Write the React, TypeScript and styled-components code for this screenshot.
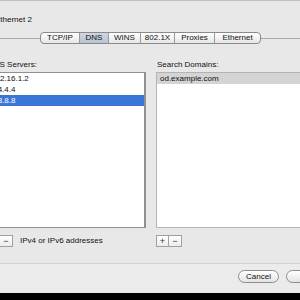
import { FC } from 'react';
import styled, { createGlobalStyle } from 'styled-components';

const GlobalStyle = createGlobalStyle`
  html, body {
    margin: 0;
    padding: 0;
    width: 300px;
    height: 300px;
    overflow: hidden;
    background: #000;
  }
  body {
    font-family: "Liberation Sans", Arial, sans-serif;
    font-size: 8px;
    color: #111;
  }
`;

const Window = styled.div`
  width: 300px;
  height: 293px;
  box-sizing: border-box;
  border-top: 1px solid #c2c2c2;
  background: #e8e8e8;
  overflow: hidden;
`;

const Sheet = styled.div`
  width: 343px;
  margin-left: -13px;
  display: flex;
  flex-direction: column;
`;

const Title = styled.div`
  margin: 14px 0 0 8px;
  line-height: 10px;
  height: 10px;
`;

const TabRow = styled.div`
  display: flex;
  align-items: center;
  margin-top: 7px;
  height: 12px;
`;

const TabLine = styled.div<{ $width?: number }>`
  height: 1px;
  background: #a8a8a8;
  ${({ $width }) => ($width ? `width: ${$width}px;` : 'flex: 1;')}
`;

const Segmented = styled.div`
  display: flex;
  height: 12px;
  box-sizing: border-box;
  border: 1px solid #8a8a8a;
  border-radius: 4px;
  overflow: hidden;
  background: linear-gradient(#ffffff, #e6e6e6);
`;

const Segment = styled.div<{ $width: number; $active?: boolean }>`
  width: ${({ $width }) => $width}px;
  box-sizing: border-box;
  display: flex;
  align-items: center;
  justify-content: center;
  line-height: 10px;
  border-left: 1px solid #9a9a9a;
  background: ${({ $active }) => ($active ? 'linear-gradient(#cfd6e0, #b9c2cf)' : 'transparent')};
  &:first-child {
    border-left: none;
  }
`;

const Columns = styled.div`
  display: flex;
  gap: 10px;
  margin-top: 16px;
`;

const Column = styled.div<{ $width: number }>`
  width: ${({ $width }) => $width}px;
  display: flex;
  flex-direction: column;
`;

const Label = styled.div`
  line-height: 10px;
  height: 10px;
  padding-left: 1px;
`;

const ListBox = styled.div<{ $focused?: boolean }>`
  margin-top: 2px;
  height: 156px;
  box-sizing: border-box;
  background: #fff;
  border: 1px solid ${({ $focused }) => ($focused ? '#8d9097' : '#b4b4b4')};
  border-right-width: ${({ $focused }) => ($focused ? 2 : 1)}px;
`;

const Row = styled.div<{ $selected?: boolean; $dim?: boolean }>`
  height: 11px;
  line-height: 11px;
  padding-left: 3px;
  background: ${({ $selected, $dim }) => ($selected ? ($dim ? '#d4d4d4' : '#3a76d7') : 'transparent')};
  color: ${({ $selected, $dim }) => ($selected && !$dim ? '#fff' : '#111')};
`;

const ButtonBar = styled.div`
  display: flex;
  align-items: center;
  margin-top: 7px;
  height: 12px;
`;

const SquareButton = styled.div`
  width: 13px;
  height: 12px;
  box-sizing: border-box;
  border: 1px solid #a0a0a0;
  background: linear-gradient(#ffffff, #ececec);
  display: flex;
  align-items: center;
  justify-content: center;
  font-size: 9px;
  line-height: 9px;
  color: #333;
  & + & {
    border-left: none;
  }
`;

const Hint = styled.span`
  margin-left: 7px;
  line-height: 10px;
`;

const Footer = styled.div`
  margin-top: 16px;
  border-top: 1px solid #d0d0d0;
  height: 29px;
  background: #ebebeb;
  display: flex;
  justify-content: flex-end;
  align-items: flex-start;
  gap: 7px;
  padding: 6px 3px 0 0;
  box-sizing: border-box;
`;

const PushButton = styled.div`
  width: 41px;
  height: 13px;
  box-sizing: border-box;
  border: 1px solid #8c8c8c;
  border-radius: 7px;
  background: linear-gradient(#ffffff, #e4e4e4);
  display: flex;
  align-items: center;
  justify-content: center;
  line-height: 11px;
`;

const tabs = [
  { name: 'TCP/IP', width: 38 },
  { name: 'DNS', width: 29 },
  { name: 'WINS', width: 32 },
  { name: '802.1X', width: 34 },
  { name: 'Proxies', width: 40 },
  { name: 'Ethernet', width: 46 },
];

const dnsServers = ['172.16.1.2', '4.4.4.4', '8.8.8.8'];
const searchDomains = ['od.example.com'];

const App: FC = () => {
  return (
    <>
      <GlobalStyle />
      <Window>
        <Sheet>
          <Title>Ethernet 2</Title>
          <TabRow>
            <TabLine $width={53} />
            <Segmented>
              {tabs.map((t) => (
                <Segment key={t.name} $width={t.width} $active={t.name === 'DNS'}>
                  {t.name}
                </Segment>
              ))}
            </Segmented>
            <TabLine />
          </TabRow>

          <Columns>
            <Column $width={159}>
              <Label>DNS Servers:</Label>
              <ListBox $focused>
                {dnsServers.map((s, i) => (
                  <Row key={s} $selected={i === 2}>
                    {s}
                  </Row>
                ))}
              </ListBox>
              <ButtonBar>
                <SquareButton>+</SquareButton>
                <SquareButton>−</SquareButton>
                <Hint>IPv4 or IPv6 addresses</Hint>
              </ButtonBar>
            </Column>
            <Column $width={174}>
              <Label>Search Domains:</Label>
              <ListBox>
                {searchDomains.map((d) => (
                  <Row key={d} $selected $dim>
                    {d}
                  </Row>
                ))}
              </ListBox>
              <ButtonBar>
                <SquareButton>+</SquareButton>
                <SquareButton>−</SquareButton>
              </ButtonBar>
            </Column>
          </Columns>

          <Footer>
            <PushButton>Cancel</PushButton>
            <PushButton>OK</PushButton>
          </Footer>
        </Sheet>
      </Window>
    </>
  );
};

export default App;
